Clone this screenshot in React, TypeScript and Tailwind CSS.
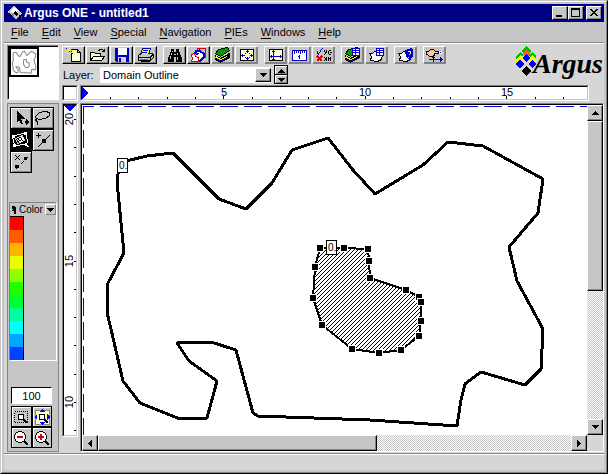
import React from "react";

const FONT = "font-['Liberation_Sans',Arial,sans-serif]";

const RAISED = "border border-t-white border-l-white border-r-black border-b-black";
const RAISED_IN = "shadow-[inset_-1px_-1px_0_#848484]";
const SUNKEN = "border border-t-[#848484] border-l-[#848484] border-r-white border-b-white";
const CHECKER =
  "bg-[repeating-conic-gradient(#c6c6c6_0_25%,#ffffff_0_50%)] bg-[length:2px_2px]";

/* ---------- drawings ---------- */

function Icon({ w = 19, h = 16, children }: { w?: number; h?: number; children: React.ReactNode }) {
  return (
    <svg
      width={w}
      height={h}
      viewBox={`0 0 ${w} ${h}`}
      shapeRendering="crispEdges"
      fill="none"
      className="shrink-0"
      aria-hidden="true"
    >
      {children}
    </svg>
  );
}

const NewIcon = () => (
  <Icon>
    <path d="M7.5 2.5h6l3 3v9h-9z" fill="#ffffd6" stroke="#000" />
    <path d="M13.5 2.5v3h3" stroke="#000" />
    <path d="M5 0h1v8h-1zM2 3h7v1h-7zM3 1h1v1h-1zM7 1h1v1h-1zM3 5h1v1h-1zM7 5h1v1h-1zM4 2h3v3h-3z" fill="#ffef00" />
    <path d="M2 1h1v1h-1zM8 6h1v1h-1zM5 4h1v1h-1z" fill="#0000d6" />
  </Icon>
);
const OpenIcon = () => (
  <Icon>
    <path d="M2.5 13.5v-8h4l1 1h5v3" fill="#ffffd6" stroke="#000" />
    <path d="M2.5 13.5l3-4h11l-3 4z" fill="#ffffd6" stroke="#000" />
    <path d="M10.5 3.5l2-1h2l2 2M16.5 1.5v3h-3" stroke="#000" />
  </Icon>
);
const SaveIcon = () => (
  <Icon>
    <path d="M3 1h14v14H4l-1-1z" fill="#0000c6" />
    <path d="M6 1h9v7H6z" fill="#fff" />
    <path d="M6 10h8v5H6z" fill="#d6d6d6" />
    <path d="M7 11h2v4H7z" fill="#0000c6" />
  </Icon>
);
const PrintIcon = () => (
  <Icon>
    <path d="M6.5 1.5h8l-2 6h-8z" fill="#ffff00" stroke="#0000c6" />
    <path d="M8 3.5h4M7 5.5h4" stroke="#0000c6" />
    <path d="M2.5 8.5l3-2h10l2 1v3l-3 3h-12z" fill="#c6c6c6" stroke="#000" />
    <path d="M6 1.5h8M7 3.5h5M6 5.5h5" stroke="#0000c6" />
    <path d="M8 2h5v1H8zM8 4h4v1H8zM6 6h6v1H6z" fill="#ffff00" />
    <path d="M2 10.5h12l3-3M14.5 10v4M4.5 14.5h9l3-3" stroke="#000" />
    <path d="M4 12h8v1H4z" fill="#848400" />
  </Icon>
);
const FindIcon = () => (
  <Icon>
    <path d="M6 2h3v3h2V2h3v3h1v3h1v2h1v5h-6v-5H9v5H3v-5h1V8h1V5h1z" fill="#000" />
    <path d="M6 6h1v2H6zM5 9h1v3H5zM12 6h1v2h-1zM12 10h1v3h-1zM7 4h1v1H7z" fill="#c6c6c6" />
    <path d="M9 7h2v1H9z" fill="#c6c6c6" />
  </Icon>
);
const ShapesIcon = () => (
  <Icon>
    <path d="M8.5 6V1.5h8v9h-3" stroke="#d60000" />
    <path d="M6.5 4.5l4-1 4 3v4l-3 3h-4" stroke="#0000c6" strokeWidth="2" fill="#fff" />
    <path d="M5 5l5 1-2 3z" fill="#0000c6" />
    <path d="M2.5 7.5l3-1 1 3 3 1v4h-7l1-3z" stroke="#d60000" fill="#fff" />
  </Icon>
);
const Layers = () => (
  <>
    <path d="M2.5 11.5v1l5 3 9-5v-2l-9 5z" fill="#0000c6" stroke="#000" />
    <path d="M2.5 8.5v1l5 3 9-5v-1l-9 5z" fill="#ffff00" stroke="#000" />
    <path d="M2.5 6.5l3-4 9-2 2 3-9 6z" fill="#009c00" stroke="#000" />
    <path d="M3 9h1v1h1v1h2v1h2v-1h2v-1h2V9h1v1h-1v1h-2v1H9v1H7v-1H5v-1H3z" fill="#ffff00" />
  </>
);
const LayersIcon = () => (
  <Icon>
    <Layers />
  </Icon>
);
const FitIcon = () => (
  <Icon>
    <path d="M3.5 2.5h13v11h-13z" fill="#ffffd6" stroke="#000" />
    <path d="M10.5 3v3M10.5 10v3M4 8.5h4M13 8.5h4M9 4.5h3M9 11.5h3M5.5 7v3M14.5 7v3" stroke="#0000c6" />
    <path d="M8 6h1v1H8zM12 6h1v1h-1zM8 10h1v1H8zM12 10h1v1h-1z" fill="#0000c6" />
  </Icon>
);
const AxesIcon = () => (
  <Icon>
    <path d="M3.5 2.5h13v11h-13z" fill="#ffffd6" stroke="#000" />
    <path d="M7.5 3v10M4 9.5h12M6 4.5h3M14.5 8v3M5.5 8v3M6 12.5h3" stroke="#0000c6" />
  </Icon>
);
const RulerIcon = () => (
  <Icon>
    <path d="M2.5 3.5h14v10h-14z" fill="#fff" stroke="#0000c6" />
    <path d="M4.5 4v3M6.5 4v2M8.5 4v2M10.5 4v3M12.5 4v2M14.5 4v2" stroke="#0000c6" />
    <path d="M9.5 8v4M8 9.5h1" stroke="#0000c6" />
  </Icon>
);
const CheckIcon = () => (
  <Icon>
    <path d="M3.5 4v2l1 1 4-6" stroke="#0000c6" />
    <path d="M3 9l5 5M8 9l-5 5" stroke="#d60000" strokeWidth="1.5" />
    <path d="M10 3h1v2h-1zM12 3h1v3h-1zM11 5h1v2h-1zM10 7h1v1h-1zM15 3h2v1h-2zM14 4h1v3h-1zM16 5h2v1h-2zM15 7h2v1h-2zM10 10h1v1h-1zM11 11h1v2h-1zM10 13h1v1h-1zM12 10h1v4h-1zM14 10h1v4h-1zM15 11h1v1h-1zM16 10h1v4h-1z" fill="#000" />
  </Icon>
);
const TableGlyph = ({ x }: { x: number }) => (
  <>
    <path d={`M${x}.5 1.5h7v7h-7z`} fill="#fff" stroke="#0000c6" />
    <path d={`M${x} 3.5h8M${x} 5.5h8M${x + 3}.5 1v8`} stroke="#0000c6" />
  </>
);
const LayerTableIcon = () => (
  <Icon>
    <Layers />
    <TableGlyph x={9} />
  </Icon>
);
const Blob = () => (
  <path d="M2.5 6.5l3 0 2-2h6l2 3-1 5-4 2-7-1 1-4z" fill="#fff" stroke="#000" />
);
const ShapeTableIcon = () => (
  <Icon>
    <Blob />
    <TableGlyph x={9} />
  </Icon>
);
const ShapeInfoIcon = () => (
  <Icon>
    <Blob />
    <path d="M9 3l6-2 2 2v6l-4 4-3-3z" fill="#0000c6" />
    <path d="M11.5 4.5h3v2l-2 2M12 10.5h1" stroke="#ffff00" />
  </Icon>
);
const HandIcon = () => (
  <Icon>
    <path d="M8.5 8v7M4 12.5h13M15 10.5l2 2-2 2M7 10.5h3" stroke="#0000c6" />
    <path d="M1.5 4.5h2l2-2h3l2 2h3v2h-4v2l-2 1h-3l-2-2h-1z" fill="#ffc69c" stroke="#000" />
    <path d="M14 4h3v3h-3z" fill="#fff" />
    <path d="M15 5h1v1h-1z" fill="#0000c6" />
  </Icon>
);

const PointerTool = () => (
  <Icon w={20} h={20}>
    <path d="M6 3l8 8h-4l2 5h-2l-2-4-2 3z" fill="#000" />
    <path d="M14 13h1v-2l3 3-3 3v-2h-1z" fill="#000" />
  </Icon>
);
const LassoTool = () => (
  <Icon w={20} h={20}>
    <path d="M3.5 11.5l-1-3 4-4 6-1 4 1v3l-4 3-6 1-3-1-1 2 2 1v3" stroke="#000" />
  </Icon>
);
const ContourTool = () => (
  <Icon w={20} h={20}>
    <path d="M1.5 6.5l13-4 1 3 1 6-1 3-12 1z" stroke="#fff" />
    <path d="M4.5 8.5l7-3 2 5-7 3z" stroke="#c6c6c6" />
    <path d="M7 7l5 5M6 9l4 4M10 6l3 4M7 11l4-4M9 12l4-4" stroke="#fff" />
    <path d="M1 5h3v3H1zM13 2h3v3h-3zM2 14h3v3H2zM14 12l4 5-4-1z" fill="#fff" />
  </Icon>
);
const AddNodeTool = () => (
  <Icon w={20} h={20}>
    <path d="M3 5.5h5M5.5 3v5M5 17l12-12" stroke="#000" />
    <path d="M9 9h4v4H9z" fill="#000" />
  </Icon>
);
const CutNodeTool = () => (
  <Icon w={20} h={20}>
    <path d="M4 3l5 5M9 3l-5 5" stroke="#000" />
    <path d="M5 17l12-12" stroke="#000" strokeDasharray="4 3" />
    <path d="M4 13h4v3H4zM13 5h3v3h-3z" fill="#000" />
  </Icon>
);
const Glass = ({ sign }: { sign?: "minus" | "plus" }) => (
  <>
    <path d="M11 11l5 5" stroke="#000" strokeWidth="2" />
    <circle cx="8" cy="8" r="5.5" fill="#fff" stroke="#000" />
    {sign && <path d="M5 7h6v2H5z" fill="#d60000" />}
    {sign === "plus" && <path d="M7 5h2v6H7z" fill="#d60000" />}
  </>
);
const SmallGlass = () => (
  <>
    <circle cx="9" cy="9" r="3" fill="#fff" stroke="#000" />
    <path d="M11 11l4 4" stroke="#000" strokeWidth="2" />
  </>
);

const OUTER =
  "119,166 117,182 124,253 108,283 107,312 123,381 140,403 180,419 207,418 217,381 189,361 177,343 211,342 236,350 253,413 258,416 370,420 457,426 461,400 465,384 481,372 525,385 541,369 543,329 517,281 509,247 538,213 543,179 483,146 448,142 423,165 375,194 353,170 328,138 292,150 272,183 246,209 219,199 173,153 147,156 122,162";

const NODES: [number, number][] = [
  [320, 248], [344, 248], [368, 249], [369, 261], [370, 278], [406, 290],
  [419, 297], [421, 302], [421, 321], [419, 336], [401, 350], [379, 353],
  [352, 349], [322, 325], [313, 298], [315, 267],
];

function Tag({ x, y }: { x: number; y: number }) {
  return (
    <g>
      <rect x={x + 0.5} y={y + 0.5} width="10" height="14" fill="#fff" stroke="#000" />
      <text x={x + 2} y={y + 11} fontSize="10" fill="#000">
        0.
      </text>
    </g>
  );
}

function Drawing() {
  return (
    <svg width="100%" height="100%" className={`block ${FONT}`} shapeRendering="crispEdges" role="img" aria-label="Domain Outline">
      <defs>
        <pattern id="hatch" width="4" height="4" patternUnits="userSpaceOnUse">
          <path d="M3 0h1v1H3zM2 1h1v1H2zM1 2h1v1H1zM0 3h1v1H0z" fill="#000" />
        </pattern>
      </defs>
      <g transform="translate(-82 -105)">
        <path d="M84 106.5H4000" stroke="#0000e7" strokeDasharray="18 6" strokeDashoffset="8" />
        <path d="M83.5 106V4000" stroke="#0000e7" strokeDasharray="18 6" strokeDashoffset="0" />
        <polygon points={OUTER} fill="none" stroke="#000" strokeWidth="3" strokeLinejoin="round" />
        <polygon points={NODES.map((p) => p.join(",")).join(" ")} fill="url(#hatch)" stroke="#000" strokeWidth="2" />
        {NODES.map(([x, y]) => (
          <rect key={`${x}-${y}`} x={x - 3.5} y={y - 3.5} width="7" height="7" fill="#000" stroke="#fff" />
        ))}
        <Tag x={117} y={158} />
        <Tag x={326} y={240} />
      </g>
    </svg>
  );
}

const TICKS = Array.from({ length: 60 }, (_, i) => i);

function HorizontalRuler() {
  return (
    <svg width="100%" height="12" className={`block ${FONT}`} shapeRendering="crispEdges">
      <path d="M0 0l7 6-7 6z" fill="#0000ff" />
      {TICKS.map((i) => (
        <rect key={i} x={Math.round(28 + i * 28.3)} y={i % 5 === 4 ? 9 : 10} width="1" height="3" fill="#000" />
      ))}
      {[5, 10, 15].map((n) => (
        <text key={n} x={Math.round(n * 28.3)} y="9" fontSize="11" textAnchor="middle">
          {n}
        </text>
      ))}
    </svg>
  );
}

function VerticalRuler() {
  return (
    <svg width="12" height="100%" className={`block ${FONT}`} shapeRendering="crispEdges">
      <path d="M0 0h12l-6 7z" fill="#0000ff" />
      {TICKS.map((i) => (
        <rect key={i} x="10" y={Math.round(14 + i * 28.3)} width="2" height="1" fill="#000" />
      ))}
      {[20, 15, 10].map((n, i) => {
        const y = Math.round(14 + i * 141.5);
        return (
          <text key={n} x="9" y={y} fontSize="11" textAnchor="middle" transform={`rotate(-90 9 ${y})`}>
            {n}
          </text>
        );
      })}
    </svg>
  );
}

const ARROWS = {
  up: "M3 0h1v1h1v1h1v1h1v1H0V3h1V2h1V1h1z",
  down: "M0 0h7v1H6v1H5v1H4v1H3V3H2V2H1V1H0z",
  left: "M0 3h1V2h1V1h1V0h1v7H3V6H2V5H1V4H0z",
  right: "M0 0h1v1h1v1h1v1h1v1H3v1H2v1H1v1H0z",
};
function Arrow({ dir }: { dir: keyof typeof ARROWS }) {
  const flat = dir === "up" || dir === "down";
  return (
    <Icon w={flat ? 7 : 4} h={flat ? 4 : 7}>
      <path d={ARROWS[dir]} fill="#000" />
    </Icon>
  );
}

function ScrollButton({ dir }: { dir: keyof typeof ARROWS }) {
  return (
    <button aria-label={`Scroll ${dir}`} className={`flex size-4 shrink-0 items-center justify-center bg-[#c6c6c6] ${RAISED} ${RAISED_IN}`}>
      <Arrow dir={dir} />
    </button>
  );
}

/* ---------- window parts ---------- */

const MENUS = ["File", "Edit", "View", "Special", "Navigation", "PIEs", "Windows", "Help"];

type Tool = [string, () => React.JSX.Element, boolean];
const TOOLBAR: Tool[][] = [
  [["New", NewIcon, true], ["Open", OpenIcon, true], ["Save", SaveIcon, true], ["Print", PrintIcon, true]],
  [["Find", FindIcon, true], ["Shapes", ShapesIcon, true], ["Layers", LayersIcon, false], ["Fit", FitIcon, false]],
  [["Axes", AxesIcon, false], ["Rulers", RulerIcon, false], ["Check", CheckIcon, false]],
  [["Layer table", LayerTableIcon, false], ["Shape table", ShapeTableIcon, false]],
  [["Shape info", ShapeInfoIcon, false]],
  [["Place", HandIcon, false]],
];

function TitleButton({ label, children }: { label: string; children: React.ReactNode }) {
  return (
    <button aria-label={label} className={`flex h-[14px] w-4 items-center justify-center bg-[#c6c6c6] ${RAISED} ${RAISED_IN}`}>
      <Icon w={12} h={10}>{children}</Icon>
    </button>
  );
}

function TitleBar() {
  return (
    <header className="flex h-[18px] shrink-0 items-center bg-[#000084] pr-[2px] pl-[3px] text-white">
      <Icon w={16} h={16}>
        <path d="M7 1l8 8-6 5L0 7z" fill="#c6c6c6" />
        <path d="M7 2l4 4-4 3-4-3z" fill="#fff" />
        <path d="M8 6l3 3-2 2-3-3zM2 8l3 3H3zM12 10h2v3h-2z" fill="#000" />
        <path d="M5 8h2v3H5z" fill="#848484" />
        <path d="M14 11h1v3h-1z" fill="#d60000" />
      </Icon>
      <h1 className="ml-px flex-1 text-[12px] leading-4 font-bold">Argus ONE - untitled1</h1>
      <div className="flex">
        <TitleButton label="Minimize">
          <path d="M2 7h6v2H2z" fill="#000" />
        </TitleButton>
        <TitleButton label="Maximize">
          <path d="M1 0h9v9H1zM2 2v6h7V2z" fill="#000" fillRule="evenodd" />
        </TitleButton>
        <div className="w-[2px]" />
        <TitleButton label="Close">
          <path d="M2 1h2v1h1v1h2V2h1V1h2v1H9v1H8v1H7v1h1v1h1v1h1v1H8V7H7V6H5v1H4v1H2V7h1V6h1V5h1V4H4V3H3V2H2z" fill="#000" />
        </TitleButton>
      </div>
    </header>
  );
}

function Logo() {
  return (
    <div className="flex h-[41px] shrink-0 items-start pt-[2px] pr-px">
      <Icon w={22} h={30}>
        <path d="M11 0l5 5-2 2-3-3-3 3-2-2z" fill="#00bd00" />
        <path d="M11 4l4 4-2 2-2-2-2 2-2-2z" fill="#ff6300" />
        <path d="M5 6l3 3-1 2-2-2-4 4V10zM17 6l4 4v3l-4-4-2 2-1-2z" fill="#00bd00" />
        <path d="M5 10l3 3-1 2-2-2-4 4v-3zM17 10l4 4v3l-4-4-2 2-1-2z" fill="#ffff00" />
        <path d="M11 8l4 4-4 4-4-4zM5 14l4 4-4 4-5-4zM17 14l5 4-5 4-4-4z" fill="#0000ff" />
        <path d="M11 20l5 5-5 5-5-5z" fill="#000" />
      </Icon>
      <span className="-ml-1 pt-[2px] font-['Liberation_Serif',serif] text-[28px] leading-8 font-bold italic">Argus</span>
    </div>
  );
}

function NavigatorPanel() {
  return (
    <div className={`h-[55px] shrink-0 ${SUNKEN}`}>
      <div className="h-full border-t border-l border-black bg-white">
        <div className="size-[30px] border-2 border-black">
          <svg width="26" height="26" viewBox="80 110 485 340" preserveAspectRatio="none" className="block" role="img" aria-label="Overview">
            <g fill="none" stroke="#848484" strokeWidth="1">
              <polygon points={OUTER} vectorEffect="non-scaling-stroke" />
              <polygon points={NODES.map((p) => p.join(",")).join(" ")} vectorEffect="non-scaling-stroke" />
            </g>
          </svg>
        </div>
      </div>
    </div>
  );
}

const DRAW_TOOLS: [string, () => React.JSX.Element][] = [
  ["Select", PointerTool],
  ["Lasso", LassoTool],
  ["Contour", ContourTool],
  ["Add node", AddNodeTool],
  ["Cut node", CutNodeTool],
];

const SWATCHES = [
  "bg-[#ff0000]", "bg-[#ff5a00]", "bg-[#ffb500]", "bg-[#e7ff00]", "bg-[#8cff00]", "bg-[#21ff00]",
  "bg-[#00ff31]", "bg-[#00ff9c]", "bg-[#00ffff]", "bg-[#00a5ff]", "bg-[#0042ff]",
];

function ToolPanel() {
  return (
    <div className="flex min-h-0 flex-1 flex-col border border-[#848484] bg-[#c6c6c6] px-px pt-[3px] pb-px">
      <div className="ml-px grid w-[44px] grid-cols-2">
        {DRAW_TOOLS.map(([label, Glyph]) => (
          <button
            key={label}
            aria-label={label}
            className={`flex size-[22px] items-center justify-center border border-black ${
              label === "Contour" ? "bg-black" : "bg-[#c6c6c6] shadow-[inset_1px_1px_0_#fff,inset_-1px_-1px_0_#848484]"
            }`}
          >
            <Glyph />
          </button>
        ))}
      </div>
      <div className="mt-[29px] border border-t-[#848484] border-l-[#848484] border-r-white border-b-white">
        <div className="flex h-[13px] items-center justify-between pl-px text-[10px] leading-3">
          <Icon w={6} h={10}>
            <path d="M1 1h3v1h1v7H3V6H1V5h1V4H1z" fill="#000" />
          </Icon>
          <span>Color</span>
          <button aria-label="Choose color mode" className="flex h-[11px] w-[11px] items-center justify-center border border-t-white border-l-white border-r-[#848484] border-b-[#848484]">
            <Arrow dir="down" />
          </button>
        </div>
        <ul className="w-[14px] border-t border-r border-black">
          {SWATCHES.map((c) => (
            <li key={c} className={`h-[13px] ${c}`} />
          ))}
        </ul>
      </div>
      <div className="mt-auto mb-[2px] ml-[2px] w-[41px]">
        <input
          aria-label="Zoom percent"
          defaultValue="100"
          className="mb-[2px] block h-[17px] w-full border border-t-black border-l-black border-r-white border-b-white bg-white text-center text-[11px] leading-3 outline-none"
        />
        <div className="grid grid-cols-2 bg-black">
          {["Zoom to area", "Zoom to fit", "Zoom out", "Zoom in"].map((label, i) => (
            <button key={label} aria-label={label} className="flex h-[21px] items-center justify-center border border-black bg-[#c6c6c6] shadow-[inset_1px_1px_0_#fff]">
              <Icon w={18} h={18}>
                {i === 0 && <path d="M2.5 3.5h13v11h-13z" stroke="#000" strokeDasharray="1 1" />}
                {i === 1 && (
                  <>
                    <path d="M2 2h14v14H2z" fill="#ffffbd" stroke="#848484" />
                    <path d="M9 1l3 3H6zM9 17l-3-3h6zM1 9l3-3v6zM17 9l-3 3V6z" fill="#0000ff" />
                  </>
                )}
                {i < 2 ? <SmallGlass /> : <Glass sign={i === 2 ? "minus" : "plus"} />}
              </Icon>
            </button>
          ))}
        </div>
      </div>
    </div>
  );
}

function RulerFrame({ className, children }: { className: string; children?: React.ReactNode }) {
  return (
    <div className={`${SUNKEN} ${className}`}>
      <div className="h-full overflow-hidden border border-t-black border-l-black border-r-[#c6c6c6] border-b-[#c6c6c6] bg-white">
        {children}
      </div>
    </div>
  );
}

function Toolbars() {
  return (
    <div className="flex justify-between">
      <div className="flex flex-col pt-[2px]">
        <div className="flex gap-[6px]">
          {TOOLBAR.map((group, g) => (
            <div key={g} className="flex gap-px">
              {group.map(([label, Glyph, strong]) => (
                <button
                  key={label}
                  aria-label={label}
                  className={`flex h-[18px] w-[23px] items-center justify-center border border-t-white border-l-white bg-[#c6c6c6] ${RAISED_IN} ${
                    strong ? "border-r-black border-b-black" : "border-r-[#848484] border-b-[#848484]"
                  }`}
                >
                  <Glyph />
                </button>
              ))}
            </div>
          ))}
        </div>
        <div className="mt-px flex h-[19px] items-center">
          <label htmlFor="layer" className="w-[38px] pl-px text-[11px] leading-4">
            Layer:
          </label>
          <div className="relative h-4">
            <select
              id="layer"
              defaultValue="Domain Outline"
              className="block h-4 w-[171px] appearance-none bg-white pl-[3px] text-[11px] leading-4 outline-none"
            >
              <option>Domain Outline</option>
            </select>
            <span className={`pointer-events-none absolute top-px right-0 flex h-[14px] w-4 items-center justify-center bg-[#c6c6c6] ${RAISED} ${RAISED_IN}`}>
              <Arrow dir="down" />
            </span>
          </div>
          <div className="ml-[3px] flex h-[19px] w-[14px] flex-col gap-px border border-black bg-black">
            {(["up", "down"] as const).map((dir) => (
              <button key={dir} aria-label={`Layer ${dir}`} className="flex h-2 items-center justify-center border-t border-l border-white bg-[#c6c6c6] shadow-[inset_-1px_-1px_0_#848484]">
                <Arrow dir={dir} />
              </button>
            ))}
          </div>
        </div>
      </div>
      <Logo />
    </div>
  );
}

function CanvasArea() {
  return (
    <div className="flex min-w-0 flex-1 flex-col border border-t-[#848484] border-l-[#848484] border-r-white border-b-white">
      <div className="flex min-h-0 flex-1 flex-col border-t border-l border-black bg-white">
        <div className="flex min-h-0 flex-1">
          <main className="min-w-0 flex-1 overflow-hidden">
            <Drawing />
          </main>
          <div className={`flex w-4 flex-col ${CHECKER}`}>
            <ScrollButton dir="up" />
            <div className={`basis-[57%] bg-[#c6c6c6] ${RAISED} ${RAISED_IN}`} />
            <div className="basis-[43%]" />
            <ScrollButton dir="down" />
          </div>
        </div>
        <div className="flex h-4 bg-[#d6d6d6] pr-4">
          <div className={`flex flex-1 ${CHECKER}`}>
            <ScrollButton dir="left" />
            <div className={`basis-[59%] bg-[#c6c6c6] ${RAISED} ${RAISED_IN}`} />
            <div className="basis-[41%]" />
            <ScrollButton dir="right" />
          </div>
        </div>
      </div>
    </div>
  );
}

export default function App() {
  return (
    <div className={`flex h-screen min-h-[440px] flex-col border border-t-[#c6c6c6] border-l-[#c6c6c6] border-r-black border-b-black bg-[#c6c6c6] text-black ${FONT}`}>
      <div className="flex min-h-0 flex-1 flex-col border border-t-white border-l-white border-r-[#848484] border-b-[#848484] p-[2px]">
        <TitleBar />
        <nav className="flex h-5 shrink-0 items-center gap-[13px] pl-[7px] text-[11px] leading-4">
          {MENUS.map((m) => (
            <button key={m}>
              <span className="underline underline-offset-2">{m[0]}</span>
              {m.slice(1)}
            </button>
          ))}
        </nav>
        <div className="h-[2px] shrink-0 border-t border-b border-t-[#848484] border-b-white" />
        <div className="flex min-h-0 flex-1 bg-[#d6d6d6] pb-px">
          <aside className="flex w-[55px] shrink-0 flex-col gap-[3px] pt-px pl-[3px]">
            <NavigatorPanel />
            <ToolPanel />
          </aside>
          <section className="ml-[3px] flex min-w-0 flex-1 flex-col">
            <Toolbars />
            <div className="flex h-4 shrink-0 gap-[2px]">
              <RulerFrame className="w-4 shrink-0" />
              <RulerFrame className="mr-[15px] min-w-0 flex-1">
                <HorizontalRuler />
              </RulerFrame>
            </div>
            <div className="mt-[2px] flex min-h-0 flex-1 gap-[2px]">
              <RulerFrame className="mb-[15px] w-4 shrink-0">
                <VerticalRuler />
              </RulerFrame>
              <CanvasArea />
            </div>
          </section>
        </div>
        <footer className="h-[17px] shrink-0 border-t border-[#848484] bg-[#d6d6d6] shadow-[inset_0_1px_0_#fff]" />
      </div>
    </div>
  );
}
